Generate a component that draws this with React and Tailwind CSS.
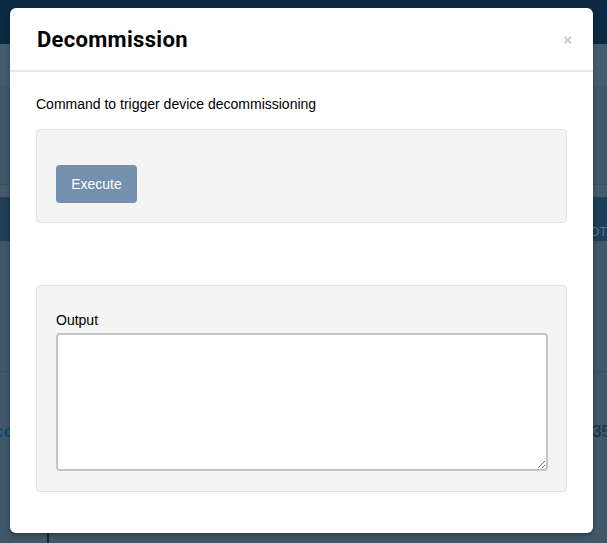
import React from 'react';

function PageBehind() {
  return (
    <div className="flex flex-col w-full h-full bg-[#3f5769] font-['Liberation_Sans',Arial,sans-serif]">
      <div className="h-[44px] bg-[#0b2942]" />
      <div className="h-[42px] bg-[#445c6e]" />
      <div className="h-[99px] bg-[#3f5769] border-b border-[#37505f]" />
      <div className="h-[12px] bg-[#44596b]" />
      <div className="h-[44px] bg-[#1e3e58] flex items-end justify-end pb-[1px] text-[13px] leading-[16px] text-[#5a7189] overflow-hidden whitespace-nowrap">
        <span className="mr-[-8px]">OTA</span>
      </div>
      <div className="h-[131px] border-b border-[#37505f]" />
      <div className="h-[120px] flex items-center justify-between text-[17px] overflow-hidden whitespace-nowrap">
        <span className="ml-[-6px] font-bold text-[#0b4a78]">co</span>
        <span className="mr-[-4px] text-[#1c2d3a]">35</span>
      </div>
      <div className="flex-1 pl-[47px]">
        <div className="w-[2px] h-full bg-[#152532]" />
      </div>
    </div>
  );
}

function Well({ children, className }) {
  return (
    <div className={`bg-[#f4f4f4] border border-[#e3e3e3] rounded-[4px] px-[19px] ${className}`}>
      {children}
    </div>
  );
}

export default function App() {
  return (
    <div className="relative w-[607px] h-[543px] overflow-hidden">
      <PageBehind />

      {/* modal */}
      <div className="absolute left-[10px] top-[8px] w-[583px] h-[525px] bg-white rounded-[6px] shadow-[0_2px_4px_rgba(0,0,0,0.35)] flex flex-col font-['Liberation_Sans',Arial,sans-serif]">
        <div className="h-[64px] flex items-center justify-between pl-[27px] pr-[21px] border-b-2 border-[#e5e9ec]">
          <h2 className="text-[22px] font-bold text-black tracking-[0.3px] font-['Roboto',sans-serif] mt-[1px]">Decommission</h2>
          <span className="text-[15px] font-bold text-[#c4c9ce] leading-none">×</span>
        </div>

        <div className="px-[26px] pt-[22px]">
          <p className="text-[14px] leading-[20px] text-black">Command to trigger device decommissioning</p>

          <Well className="mt-[15px] pt-[35px] pb-[19px]">
            <button className="h-[38px] w-[81px] rounded-[4px] bg-[#7590ae] text-white text-[14px]">
              Execute
            </button>
          </Well>

          <Well className="mt-[62px] pt-[26px] pb-[20px]">
            <label className="block text-[14px] leading-[16px] text-black mb-[5px]">Output</label>
            <textarea className="block w-[492px] h-[138px] bg-white border-2 border-[#c2c6ca] rounded-[4px] resize-y outline-none" />
          </Well>
        </div>
      </div>
    </div>
  );
}
